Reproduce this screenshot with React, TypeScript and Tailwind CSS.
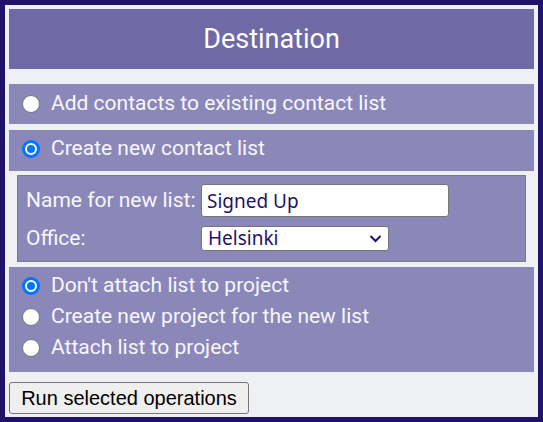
import React, { useState } from 'react';

const Radio: React.FC<{ checked: boolean; onClick: () => void }> = ({ checked, onClick }) => (
  <span
    onClick={onClick}
    className={`inline-block shrink-0 w-[18px] h-[18px] rounded-full cursor-pointer ${
      checked ? 'bg-[#0075ff] border-0 p-[3px]' : 'bg-white border border-[#767676]'
    }`}
  >
    {checked && (
      <span className="block w-full h-full rounded-full bg-[#0075ff] border-[2px] border-white" />
    )}
  </span>
);

const App: React.FC = () => {
  const [destination, setDestination] = useState<string>('new');
  const [project, setProject] = useState<string>('none');
  const [listName, setListName] = useState<string>('Signed Up');
  const [office, setOffice] = useState<string>('Helsinki');

  const font = "font-['Roboto',_'Liberation_Sans',_sans-serif]";

  return (
    <div className={`w-[543px] h-[422px] border-[5px] border-[#1f1268] bg-[#eff0f4] p-[4px] ${font}`}>
      <div className="h-[60px] bg-[#6f69a6] flex items-center justify-center text-white text-[27px]">
        Destination
      </div>

      <label className="mt-[15px] h-[40px] bg-[#8b87b9] flex items-center pl-[13px] gap-[11px] text-[21px] text-[#f7f7fb]">
        <Radio checked={destination === 'existing'} onClick={() => setDestination('existing')} />
        <span>Add contacts to existing contact list</span>
      </label>

      <label className="mt-[6px] h-[41px] bg-[#8b87b9] flex items-center pl-[13px] gap-[11px] text-[21px] text-[#f7f7fb] pb-[3px]">
        <Radio checked={destination === 'new'} onClick={() => setDestination('new')} />
        <span>Create new contact list</span>
      </label>

      <div className="mx-[8px] mt-[4px] h-[87px] border border-[#7b7b7b] bg-[#8b87b9] pl-[8px] pt-[8px] text-[21px] text-[#f7f7fb]">
        <div className="flex items-center h-[33px]">
          <span className="w-[175px]">Name for new list:</span>
          <input
            value={listName}
            onChange={(e) => setListName(e.target.value)}
            className="w-[248px] h-[33px] bg-white border border-[#767676] rounded-[3px] px-[5px] text-[19px] text-[#1f1268] font-['Noto_Sans',_sans-serif] outline-none"
          />
        </div>
        <div className="flex items-center h-[25px] mt-[9px]">
          <span className="w-[175px]">Office:</span>
          <div className="relative w-[188px] h-[25px] bg-white border border-[#767676] rounded-[3px] flex items-center">
            <select
              value={office}
              onChange={(e) => setOffice(e.target.value)}
              className="appearance-none w-full h-full bg-transparent pl-[6px] text-[19px] leading-none text-[#1f1268] font-['Noto_Sans',_sans-serif] outline-none"
            >
              <option>Helsinki</option>
              <option>Tampere</option>
              <option>Oulu</option>
            </select>
            <svg className="absolute right-[6px] top-[7px] pointer-events-none" width="13" height="9" viewBox="0 0 13 9">
              <path d="M1.5 2 L6.5 7 L11.5 2" fill="none" stroke="#1f1268" strokeWidth="2" />
            </svg>
          </div>
        </div>
      </div>

      <div className="mt-[5px] h-[105px] bg-[#8b87b9] pl-[13px] pt-[3px] text-[21px] text-[#f7f7fb]">
        {[
          ['none', "Don't attach list to project"],
          ['create', 'Create new project for the new list'],
          ['attach', 'Attach list to project'],
        ].map(([key, text]) => (
          <label key={key} className="h-[31px] flex items-center gap-[11px]">
            <Radio checked={project === key} onClick={() => setProject(key)} />
            <span>{text}</span>
          </label>
        ))}
      </div>

      <button className="mt-[10px] w-[240px] h-[32px] bg-[#efefef] border border-[#767676] rounded-[3px] text-[20px] text-black font-['Liberation_Sans',_Arial,_sans-serif]">
        Run selected operations
      </button>
    </div>
  );
};

export default App;
